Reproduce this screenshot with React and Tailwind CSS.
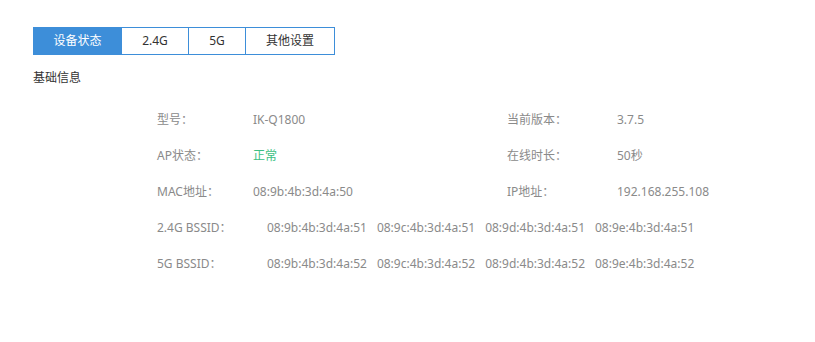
import { useState } from 'react'

const tabs = ['设备状态', '2.4G', '5G', '其他设置']
const tabWidths = ['w-[89px]', 'w-[68px]', 'w-[58px]', 'w-[90px]']

const infoRows = [
    { label: '型号：', value: 'IK-Q1800', label2: '当前版本：', value2: '3.7.5' },
    { label: 'AP状态：', value: '正常', ok: true, label2: '在线时长：', value2: '50秒' },
    { label: 'MAC地址：', value: '08:9b:4b:3d:4a:50', label2: 'IP地址：', value2: '192.168.255.108' },
]

const bssidRows = [
    { label: '2.4G BSSID：', values: ['08:9b:4b:3d:4a:51', '08:9c:4b:3d:4a:51', '08:9d:4b:3d:4a:51', '08:9e:4b:3d:4a:51'] },
    { label: '5G BSSID：', values: ['08:9b:4b:3d:4a:52', '08:9c:4b:3d:4a:52', '08:9d:4b:3d:4a:52', '08:9e:4b:3d:4a:52'] },
]

export default function App() {
    const [active, setActive] = useState(0)

    return <main className="min-h-screen bg-white pt-[27px] px-[33px] text-[12px] text-[#333]" style={{ fontFamily: '"Noto Sans", "Noto Sans CJK SC", sans-serif' }}>
        {/* 标签页 */}
        <div className="flex">
            {tabs.map((tab, i) => (
                <button
                    key={tab}
                    onClick={() => setActive(i)}
                    className={`${tabWidths[i]} h-[28px] border border-[#3d8ed9] ${i > 0 ? '-ml-px' : ''} ${active === i ? 'bg-[#3d8ed9] text-white' : 'bg-white text-[#333]'} flex items-center justify-center leading-none`}
                >
                    {tab}
                </button>
            ))}
        </div>

        <div className="mt-[14px] leading-[18px] text-[#333]">基础信息</div>

        {/* 信息列表 */}
        <div className="pl-[124px] pt-[15px] text-[#8a8a8a]">
            {infoRows.map(row => (
                <div key={row.label} className="flex h-[36px] items-center">
                    <span className="w-[96px]">{row.label}</span>
                    <span className={`w-[254px] ${row.ok ? 'text-[#3cbf83]' : ''}`}>{row.value}</span>
                    <span className="w-[110px]">{row.label2}</span>
                    <span>{row.value2}</span>
                </div>
            ))}
            {bssidRows.map(row => (
                <div key={row.label} className="flex h-[36px] items-center">
                    <span className="w-[110px]">{row.label}</span>
                    <div className="flex gap-[10px]">
                        {row.values.map(v => <span key={v}>{v}</span>)}
                    </div>
                </div>
            ))}
        </div>
    </main>
}
